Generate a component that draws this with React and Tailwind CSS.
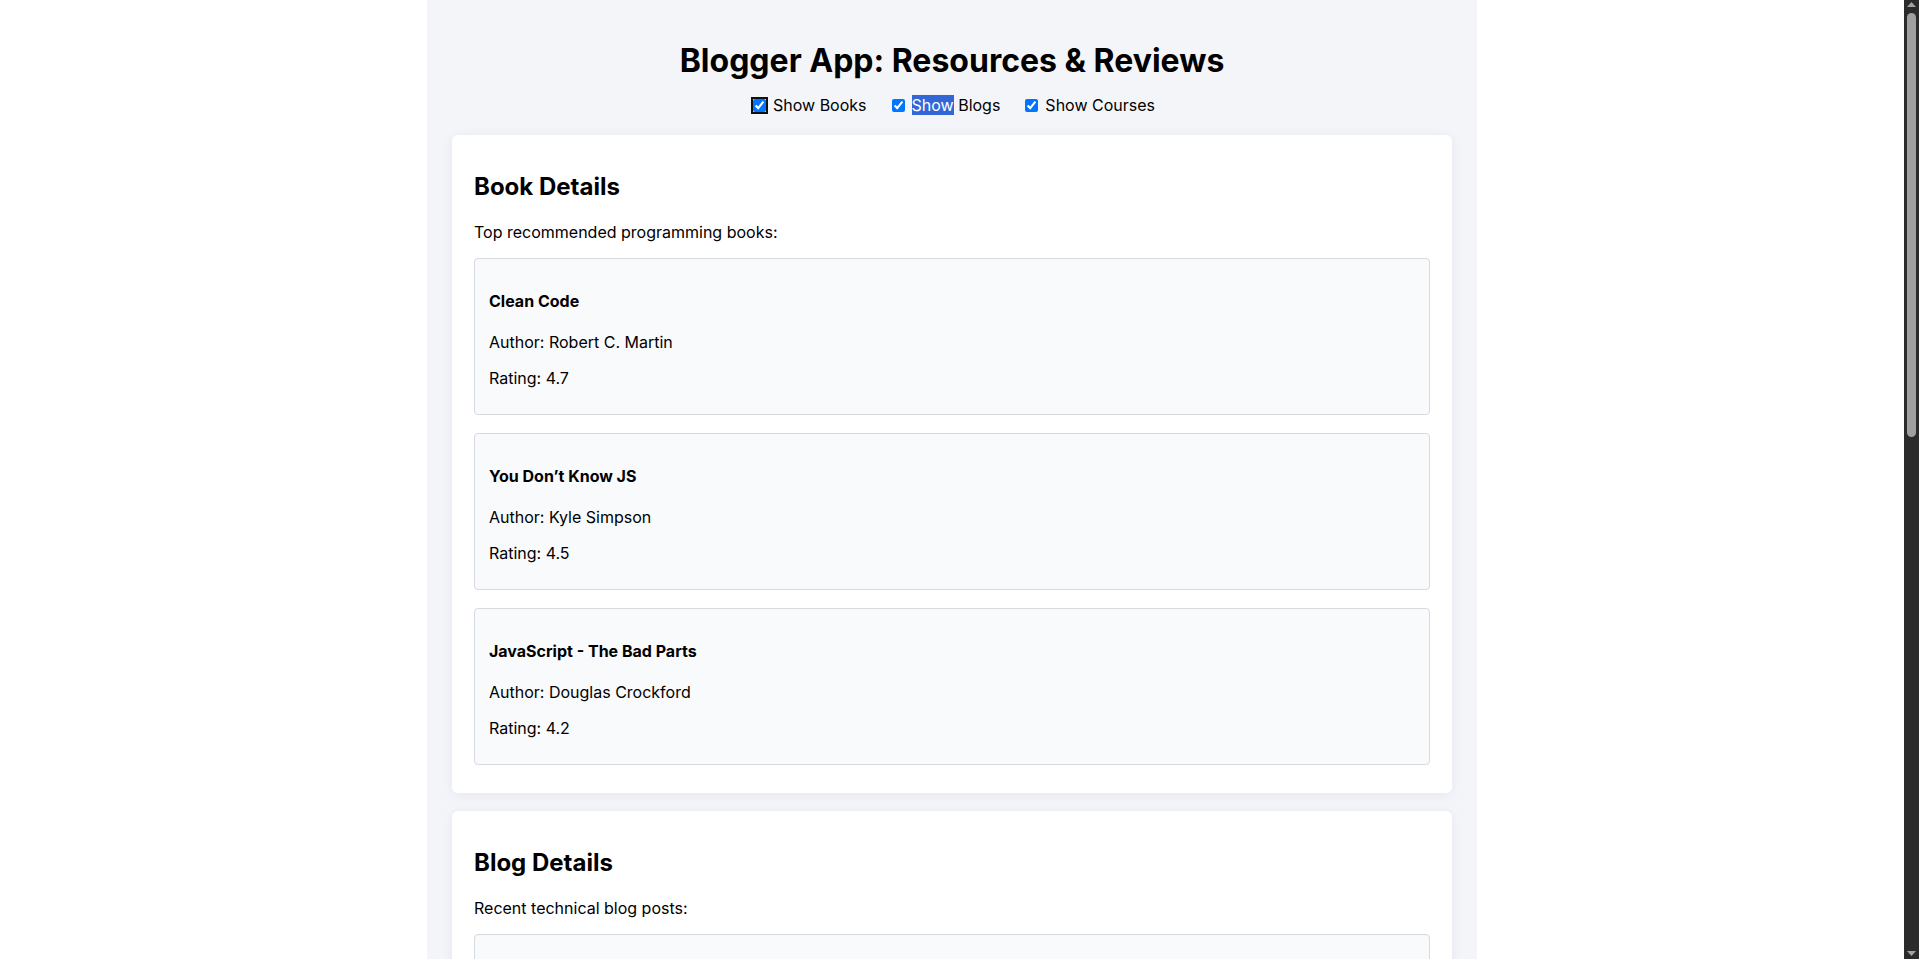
import { useState } from 'react'

const books = [
  { id: 1, title: 'Clean Code', author: 'Robert C. Martin', rating: 4.7 },
  { id: 2, title: 'You Don’t Know JS', author: 'Kyle Simpson', rating: 4.5 },
  { id: 3, title: 'JavaScript - The Bad Parts', author: 'Douglas Crockford', rating: 4.2 },
]

const blogs = [
  { id: 1, title: 'React Learning', author: 'Stephen Biz', text: 'Welcome to learning React!' },
  { id: 2, title: 'Installation', author: 'Schewzdenier', text: 'You can install React from npm.' },
  { id: 3, title: 'Understanding Hooks', author: 'Dan Abramov', text: 'State and effects without classes.' },
]

const courses = [
  { id: 1, name: 'Angular', date: '4/5/2021', instructor: 'Maximilian Schwarz' },
  { id: 2, name: 'React', date: '6/3/2021', instructor: 'Andrew Mead' },
  { id: 3, name: 'Node.js', date: '8/1/2021', instructor: 'Jonas Schmedtmann' },
]

function Section({ title, intro, children }) {
  return (
    <section className="rounded-md bg-white px-[22px] pb-[28px] pt-[20px] shadow-[0_2px_12px_rgba(30,40,80,0.07)]">
      <h2 className="mt-[17px] text-[24px] font-bold leading-[normal]">{title}</h2>
      <p className="mt-[21px] leading-[normal]">{intro}</p>
      <div className="mt-[16px] flex flex-col gap-[18px]">{children}</div>
    </section>
  )
}

function Item({ heading, lines }) {
  return (
    <div className="rounded border border-[#d6d9de] bg-[#f9fafb] px-[14px] pb-[26px] pt-[32px]">
      <h4 className="font-bold leading-[normal]">{heading}</h4>
      {lines.map((line, i) => (
        <p key={i} className={`${i === 0 ? 'mt-[21px]' : 'mt-[16px]'} leading-[normal]`}>
          {line}
        </p>
      ))}
    </div>
  )
}

// the reference shows the browser's dark scrollbar at the right edge
function Scrollbar() {
  return (
    <div className="flex w-[15px] shrink-0 flex-col items-center bg-[#2b2b2b] py-[1px]">
      <svg width="9" height="6" viewBox="0 0 9 6" className="mt-[1px]">
        <path d="M4.5 0 L9 5 L0 5 Z" fill="#a3a3a3" />
      </svg>
      <div className="mt-[5px] h-[424px] w-[9px] rounded-full bg-[#a0a0a0]" />
      <div className="flex-1" />
      <svg width="9" height="6" viewBox="0 0 9 6" className="mb-[1px]">
        <path d="M0 0 L9 0 L4.5 5 Z" fill="#a3a3a3" />
      </svg>
    </div>
  )
}

export default function App() {
  const [show, setShow] = useState({ books: true, blogs: true, courses: true })

  function toggle(key) {
    setShow((prev) => ({ ...prev, [key]: !prev[key] }))
  }

  return (
    <div className="flex h-screen bg-white text-black font-['Inter',sans-serif]">
      <main className="flex-1 overflow-y-auto [scrollbar-width:none]">
        <div className="mx-auto min-h-full w-[1050px] bg-[#f4f5f9] px-[25px] pb-[20px] pt-[20px]">
          <h1 className="mt-[21px] text-center text-[32px] font-bold leading-[normal]">
            Blogger App: Resources &amp; Reviews
          </h1>

          <div className="mt-[15px] flex items-center justify-center gap-[21px] leading-[normal]">
            <label className="flex items-center">
              <input
                type="checkbox"
                checked={show.books}
                onChange={() => toggle('books')}
                className="mr-[7px] ml-[4px] rounded-[3px] outline-2 outline-offset-0 outline-[#101010]"
              />
              Show Books
            </label>
            <label className="flex items-center">
              <input
                type="checkbox"
                checked={show.blogs}
                onChange={() => toggle('blogs')}
                className="mr-[7px] ml-[4px]"
              />
              <span className="bg-[#3367d6] text-white">Show</span>&nbsp;Blogs
            </label>
            <label className="flex items-center">
              <input
                type="checkbox"
                checked={show.courses}
                onChange={() => toggle('courses')}
                className="mr-[7px] ml-[4px]"
              />
              Show Courses
            </label>
          </div>

          <div className="mt-[20px] flex flex-col gap-[18px]">
            {show.books && (
              <Section title="Book Details" intro="Top recommended programming books:">
                {books.map((book) => (
                  <Item
                    key={book.id}
                    heading={book.title}
                    lines={[`Author: ${book.author}`, `Rating: ${book.rating}`]}
                  />
                ))}
              </Section>
            )}

            {show.blogs && (
              <Section title="Blog Details" intro="Recent technical blog posts:">
                {blogs.map((blog) => (
                  <Item key={blog.id} heading={blog.title} lines={[`Author: ${blog.author}`, blog.text]} />
                ))}
              </Section>
            )}

            {show.courses && (
              <Section title="Course Details" intro="Courses currently on offer:">
                {courses.map((course) => (
                  <Item
                    key={course.id}
                    heading={course.name}
                    lines={[`Instructor: ${course.instructor}`, `Start date: ${course.date}`]}
                  />
                ))}
              </Section>
            )}
          </div>
        </div>
      </main>
      <Scrollbar />
    </div>
  )
}
